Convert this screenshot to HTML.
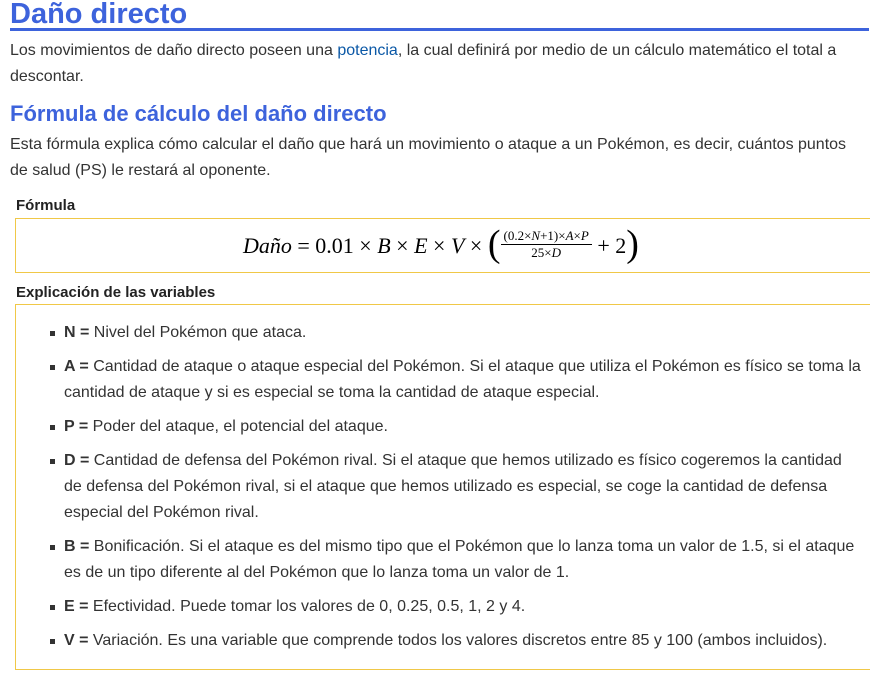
<!DOCTYPE html><html><head><meta charset="utf-8"><style>
body{margin:0;width:894px;height:676px;overflow:hidden;background:#fff;font-family:"Liberation Sans",sans-serif;color:#333;}
.a{position:absolute;white-space:nowrap}
h1{position:absolute;left:10px;top:-2px;margin:0;font-size:29px;font-weight:bold;color:#3d63dc;}
.ul{position:absolute;left:10px;top:28px;width:859px;height:3px;background:#3d63dc}
.p{font-size:16px;}
h2{position:absolute;left:10px;top:101px;margin:0;font-size:22px;color:#3d63dc;}
.lbl{font-size:15px;font-weight:bold;color:#222}
.box{position:absolute;left:15px;border:1px solid #f0c848;border-right:none;width:854px}
.li{position:absolute;left:64px;font-size:16px;line-height:26px;white-space:nowrap}
.li:before{content:"";position:absolute;left:-14px;top:11px;width:5px;height:5px;background:#333}
.m{font-family:"Liberation Serif",serif;font-size:22px;color:#000}
</style></head><body>
<h1>Daño directo</h1><div class="ul"></div>
<div class="a p" style="left:10px;top:42px">Los movimientos de daño directo poseen una <span style="color:#0b58a6">potencia</span>, la cual definirá por medio de un cálculo matemático el total a</div>
<div class="a p" style="left:10px;top:68px">descontar.</div>
<h2>Fórmula de cálculo del daño directo</h2>
<div class="a p" style="left:10px;top:136px">Esta fórmula explica cómo calcular el daño que hará un movimiento o ataque a un Pokémon, es decir, cuántos puntos</div>
<div class="a p" style="left:10px;top:162px">de salud (PS) le restará al oponente.</div>
<div class="a lbl" style="left:16px;top:197px">Fórmula</div>
<div class="box" style="top:218px;height:53px"></div>
<div class="a m" style="left:243px;top:219px"><i>Daño</i> = 0.01 × <i>B</i> × <i>E</i> × <i>V</i> × <span style="font-size:38px;position:relative;top:3px">(</span><span style="display:inline-block;vertical-align:middle;text-align:center;font-size:13px;line-height:16px;position:relative;top:-3px"><span style="display:block;border-bottom:1px solid #000;padding:0 3px">(0.2×<i>N</i>+1)×<i>A</i>×<i>P</i></span><span style="display:block">25×<i>D</i></span></span> + 2<span style="font-size:38px;position:relative;top:3px">)</span></div>
<div class="a lbl" style="left:16px;top:284px">Explicación de las variables</div>
<div class="box" style="top:304px;height:364px"></div>
<div class="li" style="top:320px"><b>N =</b> Nivel del Pokémon que ataca.</div>
<div class="li" style="top:354px"><b>A =</b> Cantidad de ataque o ataque especial del Pokémon. Si el ataque que utiliza el Pokémon es físico se toma la<br>cantidad de ataque y si es especial se toma la cantidad de ataque especial.</div>
<div class="li" style="top:414px"><b>P =</b> Poder del ataque, el potencial del ataque.</div>
<div class="li" style="top:448px"><b>D =</b> Cantidad de defensa del Pokémon rival. Si el ataque que hemos utilizado es físico cogeremos la cantidad<br>de defensa del Pokémon rival, si el ataque que hemos utilizado es especial, se coge la cantidad de defensa<br>especial del Pokémon rival.</div>
<div class="li" style="top:534px"><b>B =</b> Bonificación. Si el ataque es del mismo tipo que el Pokémon que lo lanza toma un valor de 1.5, si el ataque<br>es de un tipo diferente al del Pokémon que lo lanza toma un valor de 1.</div>
<div class="li" style="top:594px"><b>E =</b> Efectividad. Puede tomar los valores de 0, 0.25, 0.5, 1, 2 y 4.</div>
<div class="li" style="top:628px"><b>V =</b> Variación. Es una variable que comprende todos los valores discretos entre 85 y 100 (ambos incluidos).</div>
</body></html>
